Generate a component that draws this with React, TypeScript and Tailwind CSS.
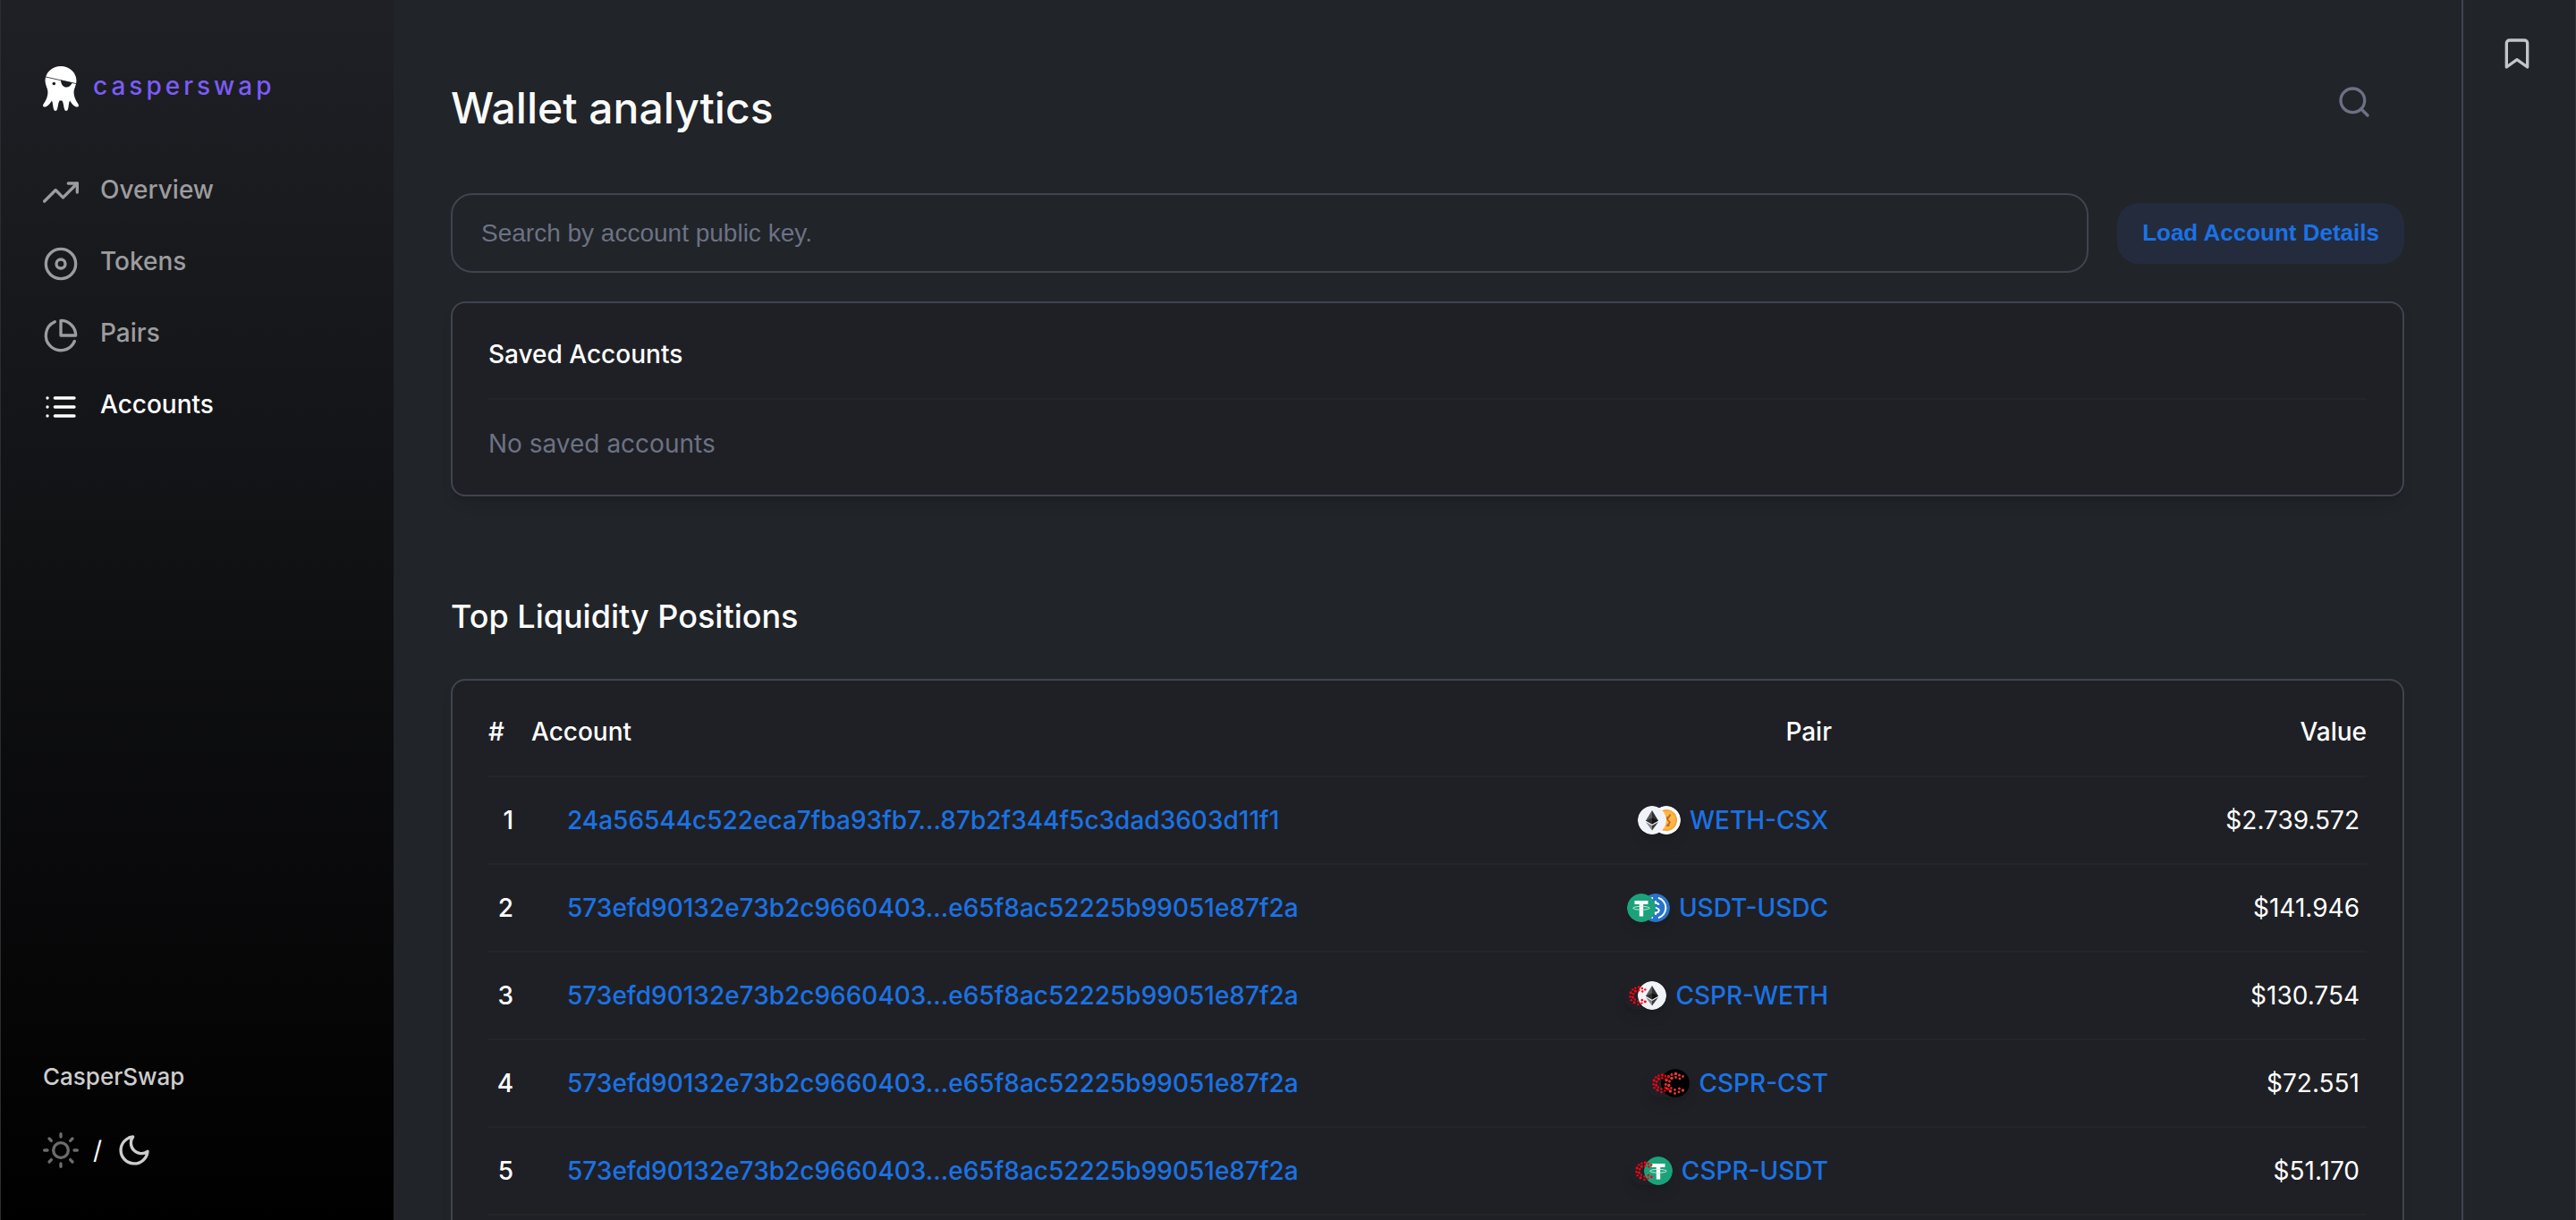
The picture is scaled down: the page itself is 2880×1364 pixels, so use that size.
import type { ReactNode } from "react";
import {
  FiBookmark,
  FiDisc,
  FiList,
  FiMoon,
  FiPieChart,
  FiSearch,
  FiSun,
  FiTrendingUp,
} from "react-icons/fi";

type Token = "WETH" | "CSX" | "USDT" | "USDC" | "CSPR" | "CST";

interface Position {
  account: string;
  pair: [Token, Token];
  value: string;
}

const positions: Position[] = [
  { account: "24a56544c522eca7fba93fb7...87b2f344f5c3dad3603d11f1", pair: ["WETH", "CSX"], value: "$2.739.572" },
  { account: "573efd90132e73b2c9660403...e65f8ac52225b99051e87f2a", pair: ["USDT", "USDC"], value: "$141.946" },
  { account: "573efd90132e73b2c9660403...e65f8ac52225b99051e87f2a", pair: ["CSPR", "WETH"], value: "$130.754" },
  { account: "573efd90132e73b2c9660403...e65f8ac52225b99051e87f2a", pair: ["CSPR", "CST"], value: "$72.551" },
  { account: "573efd90132e73b2c9660403...e65f8ac52225b99051e87f2a", pair: ["CSPR", "USDT"], value: "$51.170" },
];

const navItems = [
  { label: "Overview", icon: FiTrendingUp, active: false },
  { label: "Tokens", icon: FiDisc, active: false },
  { label: "Pairs", icon: FiPieChart, active: false },
  { label: "Accounts", icon: FiList, active: true },
];

// x, y, radius of every dot in the ring-shaped "C"
const ringDots: [number, number, number][] = [
  [24.5, 8.5, 1.4], [20.5, 7, 1.5], [16.5, 5.5, 1.8], [12, 6.5, 1.4], [8.5, 8.5, 1.4],
  [21, 11, 1.4], [16.5, 9.5, 1.4], [12, 10.5, 1.8], [6, 12.5, 1.8], [9.5, 14, 1.4],
  [5.3, 17.5, 1.4], [8.8, 18.5, 1.8], [6.5, 22, 1.4], [11.5, 21.5, 1.3], [10.5, 25, 1.8],
  [15.5, 23.5, 1.4], [15.5, 27.5, 1.4], [20, 26, 1.4], [20.5, 22, 1.5], [24.5, 24, 1.7],
];

function DotRing({ color }: { color: string }) {
  return (
    <g fill={color}>
      {ringDots.map(([cx, cy, r]) => (
        <circle key={`${cx}-${cy}`} cx={cx} cy={cy} r={r} />
      ))}
    </g>
  );
}

const tokenArt: Record<Token, ReactNode> = {
  WETH: (
    <>
      <circle cx="16" cy="16" r="16" fill="#f0f3f7" />
      <path d="M16 5 23 16.5 16 20.5Z" fill="#2f3030" />
      <path d="M16 5 9 16.5 16 20.5Z" fill="#5a5b5b" />
      <path d="M16 13.5 23 16.5 16 20.5Z" fill="#131313" />
      <path d="M16 13.5 9 16.5 16 20.5Z" fill="#2f3030" />
      <path d="M16 22 23 18 16 27.5Z" fill="#3a3a3c" />
      <path d="M16 22 9 18 16 27.5Z" fill="#85858a" />
    </>
  ),
  CSX: (
    <>
      <circle cx="16" cy="16" r="16" fill="#ffffff" />
      <circle cx="16" cy="16" r="12" fill="#f7a02e" />
      <circle cx="16" cy="16" r="10.5" fill="#ffb547" />
      <path
        d="M20.5 9.5 17 15l3 3.5-3.5 4M19 12.5l1.5-3M16.5 22.5l3-1M17 15v-3"
        fill="none"
        stroke="#b5651d"
        strokeWidth="1.5"
      />
    </>
  ),
  USDT: (
    <>
      <circle cx="16" cy="16" r="16" fill="#1ba27a" />
      <path d="M8.5 8h15v4h-5.3v13.5h-4.4V12H8.5Z" fill="#ffffff" />
      <ellipse cx="16" cy="16.3" rx="9.3" ry="1.9" fill="none" stroke="#cdebe1" strokeWidth="1" />
    </>
  ),
  USDC: (
    <>
      <circle cx="16" cy="16" r="16" fill="#2775ca" />
      <path
        d="M19 4.8a11.7 11.7 0 0 1 0 22.4M13 4.8a11.7 11.7 0 0 0 0 22.4"
        fill="none"
        stroke="#ffffff"
        strokeWidth="2"
      />
      <path
        d="M19.5 12.8c-.4-1.5-1.7-2.3-3.5-2.3-2 0-3.5 1-3.5 2.6 0 3.8 7.2 1.8 7.2 5.7 0 1.7-1.6 2.7-3.7 2.7-2.1 0-3.5-1-3.8-2.7M16 8v2.5M16 21.5V24"
        fill="none"
        stroke="#ffffff"
        strokeWidth="2"
      />
    </>
  ),
  CSPR: (
    <g transform="translate(3 2) scale(.87)">
      <DotRing color="#ff0012" />
    </g>
  ),
  CST: (
    <>
      <circle cx="16" cy="16" r="16" fill="#000000" />
      <DotRing color="#e23b36" />
    </>
  ),
};

function Coin({ token }: { token: Token }) {
  return (
    <svg viewBox="0 0 32 32" className="size-8 rounded-full" aria-hidden="true">
      {tokenArt[token]}
    </svg>
  );
}

function CoinPair({ pair }: { pair: [Token, Token] }) {
  return (
    <span className="flex rounded-full shadow-lg">
      <span className="z-10">
        <Coin token={pair[0]} />
      </span>
      <span className="-ml-4">
        <Coin token={pair[1]} />
      </span>
    </span>
  );
}

function Logo() {
  return (
    <a href="#" className="flex items-center gap-4">
      <svg viewBox="0 0 40 50" className="h-[50px] w-10" aria-hidden="true">
        <path
          fill="#ffffff"
          d="M20 0C29.500 0 37.500 7 37.500 16.500C37.500 21 34.500 25 34.500 29C34.500 34 36.500 38 39.500 42.500C41 45 38.500 46.500 36 45C33.500 43.500 31.500 41 30 38.500C28.500 42 29 45 28 48C27.300 50.500 24.700 50.500 24 48C23 45 23 41 21.500 38.500H18.500C17 41 17 45 16 48C15.300 50.500 12.700 50.500 12 48C11 45 11.500 42 10 38.500C8.500 41 6.500 43.500 4 45C1.500 46.500-1 45 .5 42.500C3.500 38 5.500 34 5.500 29C5.500 25 2.500 21 2.500 16.500C2.500 7 10.500 0 20 0Z"
        />
        <path d="M3 12 37 19.500" stroke="#1b1c21" strokeWidth="0.8" />
        <path d="M20 15.500 33 18.500C31 22 28.500 24 25.500 23.500C22 23 20 19 20 15.500Z" fill="#1b1c21" />
        <circle cx="12.3" cy="19.5" r="1.8" fill="#1b1c21" />
      </svg>
      <span className="pb-1.5 text-[28px] leading-10 font-medium tracking-[4px] text-[#7a5cf5]">casperswap</span>
    </a>
  );
}

function Sidebar() {
  return (
    <aside className="flex w-110 shrink-0 flex-col justify-between border-l border-[#2b2d31] bg-linear-to-b/srgb from-[#1f2025] to-black px-[47px] pt-[74px] pb-[58px]">
      <div>
        <Logo />
        <nav className="mt-[68px] flex flex-col gap-10">
          {navItems.map(({ label, icon: Icon, active }) => (
            <a
              key={label}
              href="#"
              className={
                active
                  ? "flex h-10 items-center gap-6 text-[28px] font-medium text-white"
                  : "flex h-10 items-center gap-6 text-[28px] font-medium text-[#9c9c9e]"
              }
            >
              <Icon className="mt-1.5 size-10" />
              {label}
            </a>
          ))}
        </nav>
      </div>
      <div>
        <p className="text-[26px] leading-10 font-medium text-[#cdcdcd]">CasperSwap</p>
        <div className="mt-[42px] flex items-center gap-4 text-[28px] leading-10 text-white">
          <button type="button" aria-label="Light theme" className="text-[#6c6c6c]">
            <FiSun className="size-10" />
          </button>
          <span>/</span>
          <button type="button" aria-label="Dark theme" className="text-[#cdcdcd]">
            <FiMoon className="size-10" />
          </button>
        </div>
      </div>
    </aside>
  );
}

export default function App() {
  return (
    <div className="flex h-screen overflow-hidden bg-[#212429] font-[Inter,sans-serif] text-[28px] text-white">
      <Sidebar />

      <main className="min-w-0 flex-1 px-16 pt-[90px]">
        <header className="flex items-start justify-between">
          <h1 className="text-[48px] leading-[62px] font-medium text-[#fafafa]">Wallet analytics</h1>
          <button type="button" aria-label="Search" className="mt-1 mr-9 text-[#6c7284]">
            <FiSearch className="size-10" />
          </button>
        </header>

        <form className="mt-16 flex items-center gap-8">
          <input
            type="text"
            aria-label="Account public key"
            placeholder="Search by account public key."
            className="h-[89px] min-w-0 flex-1 rounded-3xl border-2 border-[#40444f] bg-transparent px-8 font-['Liberation_Sans',sans-serif] text-[28px] placeholder:text-[#6c7284]"
          />
          <button
            type="button"
            className="h-[68px] rounded-3xl bg-[#242b3d] px-7 font-['Liberation_Sans',sans-serif] text-[26px] font-bold text-[#1b72e4]"
          >
            Load Account Details
          </button>
        </form>

        <section className="mt-8 rounded-2xl border-2 border-[#40444f] bg-[#1f2025] px-10 shadow-lg">
          <h2 className="flex h-[108px] items-center border-b-2 border-[#242527] pt-2 font-medium">Saved Accounts</h2>
          <p className="flex h-[106px] items-center pb-2 text-[#6c7284]">No saved accounts</p>
        </section>

        <h2 className="mt-[110px] text-[36px] leading-12 font-medium">Top Liquidity Positions</h2>

        <section className="mt-[46px] h-[800px] rounded-2xl border-2 border-[#40444f] bg-[#1f2025] px-10 shadow-lg">
          <table className="w-full">
            <thead>
              <tr className="h-[107px] border-b-2 border-[#242527] text-left">
                <th className="w-12 pt-2 font-medium">#</th>
                <th className="pt-2 font-medium">Account</th>
                <th className="w-100 pt-2 text-right font-medium">Pair</th>
                <th className="w-[598px] pt-2 text-right font-medium">Value</th>
              </tr>
            </thead>
            <tbody>
              {positions.map(({ account, pair, value }, index) => (
                <tr key={value} className="h-[98px] border-b-2 border-[#242527]">
                  <td className="pr-5 text-right font-medium">{index + 1}</td>
                  <td className="pl-10 font-medium">
                    <a href="#" className="text-[#1b72e4]">
                      {account}
                    </a>
                  </td>
                  <td className="pr-1">
                    <div className="flex items-center justify-end gap-2.5">
                      <CoinPair pair={pair} />
                      <a href="#" className="font-medium text-[#1b72e4]">
                        {pair.join("-")}
                      </a>
                    </div>
                  </td>
                  <td className="pr-2 text-right">{value}</td>
                </tr>
              ))}
            </tbody>
          </table>
        </section>
      </main>

      <aside className="flex w-32 shrink-0 flex-col items-start border-r border-l-2 border-r-[#33363c] border-l-[#40444f] pt-10 pl-10">
        <button type="button" aria-label="Saved" className="text-[#c3c5cb]">
          <FiBookmark className="size-10" />
        </button>
      </aside>
    </div>
  );
}
